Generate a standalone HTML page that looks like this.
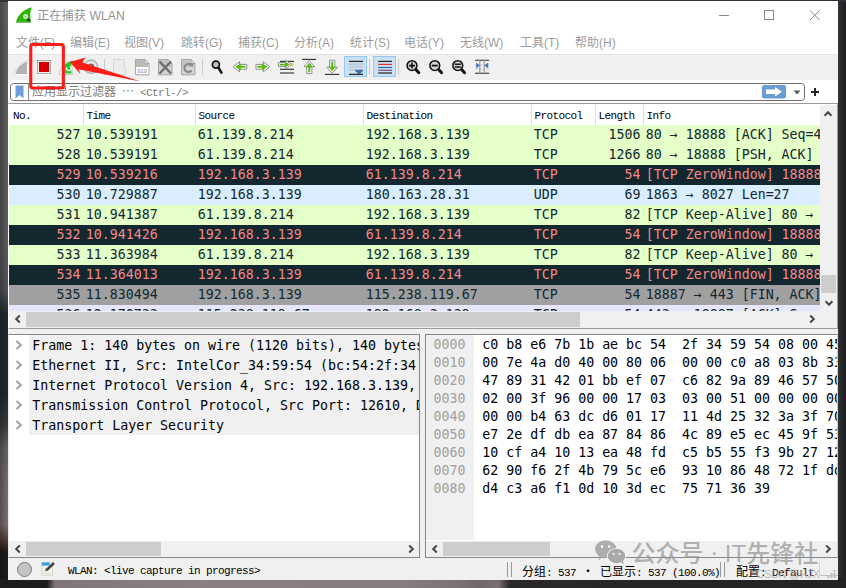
<!DOCTYPE html>
<html lang="zh-CN"><head><meta charset="utf-8"><title>正在捕获 WLAN</title>
<style>
*{box-sizing:border-box;margin:0;padding:0}
html,body{width:846px;height:588px;overflow:hidden}
body{position:relative;background:#242424;font-family:"Liberation Sans","Noto Sans CJK SC",sans-serif}
.abs{position:absolute}
#bgl{position:absolute;left:0;top:0;width:9px;height:588px;background:linear-gradient(90deg,rgba(0,0,0,.28),rgba(0,0,0,0) 85%),linear-gradient(180deg,#606060 0,#5c5c5e 240px,#505256 290px,#1f2b31 314px,#1c2a32 395px,#3a3c3e 425px,#626264 448px,#74696c 478px,#7c6c6e 525px,#4e3c32 541px,#1f1d1d 552px,#1a1a1a 588px)}
#bgb{position:absolute;left:0;top:578px;width:846px;height:10px;background:linear-gradient(90deg,#1c1c1c 0,#1c1c1c 47px,#80767a 55px,#8a7e82 200px,#877c80 400px,#7c7276 460px,#6e6669 480px,#7a7074 498px,#2a2829 510px,#222 846px)}
#bgr{position:absolute;left:837px;top:0;width:9px;height:588px;background:linear-gradient(90deg,#34383a 0,#34383a 1px,#26282a 4px,#1d1e1f 9px)}
#bgt{position:absolute;left:0;top:0;width:846px;height:2px;background:#303438}
#win{position:absolute;left:8px;top:1px;width:830px;height:579px;background:#fff;overflow:hidden}
#title{position:absolute;left:29px;top:6px;font-size:12.25px;line-height:18px;color:#949494;white-space:nowrap}
.mi{position:absolute;top:33px;font-size:12px;line-height:18px;color:#9c9c9c;white-space:nowrap}
#tb{position:absolute;left:0;top:52.5px;width:830px;height:27px;background:#f0f0f0;border-top:1px solid #e6e6e6}
#fb{position:absolute;left:0;top:79px;width:830px;height:24px;background:#fff}
#fin{position:absolute;left:2px;top:3px;width:795px;height:18px;border:1px solid #6e6e6e;border-radius:3.5px;background:#fff}
.ss{font-family:"Liberation Mono","Noto Sans CJK SC",monospace;font-size:11px;letter-spacing:-0.6px;white-space:nowrap;color:#000}
.ss b{font-weight:normal;font-size:12px;letter-spacing:0;font-family:"Noto Sans CJK SC",sans-serif}
#pl{position:absolute;left:0;top:102px;width:830px;height:226px;border:1px solid #9a9a9a;border-left-color:#fff;background:#fff;overflow:hidden}
#plin{position:absolute;left:0;top:1px;width:811px;height:206px;overflow:hidden}
.hd{position:absolute;top:0;height:20px;border-left:1px solid #e0e0e0}
.hd span{position:absolute;left:2.5px;top:3.7px;line-height:14px}
.r{position:absolute;left:0;width:811px;height:20px;font-family:"DejaVu Sans Mono", "Liberation Mono", monospace;font-size:13.29px;line-height:20px;white-space:nowrap;overflow:hidden}
.c{position:absolute;top:-0.5px}
.no{right:739.5px}
.len{right:179.5px}
.g{background:#e4ffc7;color:#12272e}
.d{background:#12272e;color:#f78787}
.u{background:#daeeff;color:#12272e}
.f{background:#a0a0a0;color:#12272e}
.p{background:#e7e6ff;color:#12272e}
.sbh{position:absolute;height:16px;background:#f0f0f0}
.sbv{position:absolute;width:17px;background:#f0f0f0}
.th{position:absolute;background:#cdcdcd}
#dp{position:absolute;left:0;top:333px;width:412px;height:224px;border:1px solid #828790;border-left-color:#e8e8e8;background:#fff;overflow:hidden}
.dr{position:absolute;left:0;width:412px;height:20px}
.chev{position:absolute;left:6.2px;top:5px;width:8px;height:10px}
.dt{position:absolute;left:20px;top:0;width:400px;height:20px;background:#f0f0f0;padding-left:3.2px;font-family:"DejaVu Sans Mono", "Liberation Mono", monospace;font-size:13.29px;line-height:22px;white-space:nowrap;color:#000;overflow:hidden}
#hp{position:absolute;left:417px;top:333px;width:413px;height:224px;border:1px solid #828790;border-right-color:#ccc;background:#fff;overflow:hidden}
#hoff{position:absolute;left:0;top:0;width:48px;height:205px;background:#f0f0f0}
.hr{position:absolute;left:0;width:420px;height:18px;font-family:"DejaVu Sans Mono", "Liberation Mono", monospace;font-size:13.29px;line-height:18px;white-space:pre}
.ho{position:absolute;left:7.5px;top:1px;color:#a0a0a0}
.hb{position:absolute;left:56.2px;top:1px;color:#000}
#st{position:absolute;left:0;top:557px;width:830px;height:22px;background:#f0f0f0}
.grip{position:absolute;top:4px;width:5px;height:15px;border-left:1px solid #9a9a9a;border-right:1px solid #9a9a9a}
#wm{position:absolute;left:623.5px;top:538px;font-size:24px;font-weight:500;line-height:30px;color:rgba(150,150,150,.72);white-space:nowrap;font-family:"Liberation Sans","Noto Sans CJK SC",sans-serif}
#wm2{position:absolute;left:748.6px;top:567px;font-size:10.5px;line-height:12px;color:rgba(176,176,176,.92);white-space:nowrap}
</style></head><body>
<div id="bgl"></div><div id="bgr"></div><div id="bgb"></div><div id="bgt"></div>
<div id="win">
<!--ICON-->
<div id="title">正在捕获 WLAN</div>
<svg class="abs" style="left:700px;top:0" width="130" height="30" viewBox="0 0 130 30"><g stroke="#8a8a8a" stroke-width="1" fill="none"><path d="M11 14.5 H21"/><rect x="56.5" y="9.5" width="9" height="9"/><path d="M102 9.5 L111.5 19 M111.5 9.5 L102 19"/></g></svg>
<span class="mi" style="left:8px">文件(F)</span><span class="mi" style="left:62px">编辑(E)</span><span class="mi" style="left:116px">视图(V)</span><span class="mi" style="left:173px">跳转(G)</span><span class="mi" style="left:230px">捕获(C)</span><span class="mi" style="left:286px">分析(A)</span><span class="mi" style="left:342px">统计(S)</span><span class="mi" style="left:396px">电话(Y)</span><span class="mi" style="left:452px">无线(W)</span><span class="mi" style="left:512px">工具(T)</span><span class="mi" style="left:567px">帮助(H)</span>
<div id="tb"><!--TOOLBAR--></div>
<div id="fb"><div id="fin"></div>
<svg class="abs" style="left:3.6px;top:5px" width="16" height="15" viewBox="0 0 16 15"><path d="M3.5 0.5 H11.5 V13.5 L7.5 10 L3.5 13.5 Z" fill="#6d9eda"/></svg>
<div class="abs" style="left:20px;top:4px;width:1px;height:17px;background:#8a8a8a"></div>
<div class="abs ss" style="left:24px;top:3px;line-height:16px;color:#7c7c7c"><b>应用显示过滤器</b> <b>…</b> &lt;Ctrl-/&gt;</div>
<svg class="abs" style="left:754px;top:5px" width="24" height="14" viewBox="0 0 24 14"><rect width="24" height="13.5" rx="2" fill="#6c9bd2"/><path d="M4 4.5 H13 V2 L20 6.75 L13 11.5 V9 H4 Z" fill="#fff"/></svg>
<svg class="abs" style="left:785px;top:9.5px" width="8" height="5" viewBox="0 0 8 5"><path d="M0.5 0.5 H7.5 L4 4.5 Z" fill="#555"/></svg>
<svg class="abs" style="left:802px;top:7px" width="10" height="10" viewBox="0 0 10 10"><path d="M5 1 V9 M1 5 H9" stroke="#222" stroke-width="2" fill="none"/></svg>
</div>
<div id="pl"><div id="plin">
<div class="ss">
<div class="hd" style="left:-1px;width:75px"><span style="left:4px">No.</span></div>
<div class="hd" style="left:74px;width:112px"><span>Time</span></div>
<div class="hd" style="left:186px;width:168px"><span>Source</span></div>
<div class="hd" style="left:354px;width:168px"><span>Destination</span></div>
<div class="hd" style="left:522px;width:64px"><span>Protocol</span></div>
<div class="hd" style="left:586px;width:48px"><span>Length</span></div>
<div class="hd" style="left:634px;width:190px"><span>Info</span></div>
</div>
<div class="r g" style="top:20px"><span class="c no">527</span><span class="c" style="left:76.7px">10.539191</span><span class="c" style="left:188.7px">61.139.8.214</span><span class="c" style="left:356.7px">192.168.3.139</span><span class="c" style="left:524.7px">TCP</span><span class="c len">1506</span><span class="c" style="left:636.7px">80 → 18888 [ACK] Seq=4</span></div>
<div class="r g" style="top:40px"><span class="c no">528</span><span class="c" style="left:76.7px">10.539191</span><span class="c" style="left:188.7px">61.139.8.214</span><span class="c" style="left:356.7px">192.168.3.139</span><span class="c" style="left:524.7px">TCP</span><span class="c len">1266</span><span class="c" style="left:636.7px">80 → 18888 [PSH, ACK] </span></div>
<div class="r d" style="top:60px"><span class="c no">529</span><span class="c" style="left:76.7px">10.539216</span><span class="c" style="left:188.7px">192.168.3.139</span><span class="c" style="left:356.7px">61.139.8.214</span><span class="c" style="left:524.7px">TCP</span><span class="c len">54</span><span class="c" style="left:636.7px">[TCP ZeroWindow] 18888 → 80</span></div>
<div class="r u" style="top:80px"><span class="c no">530</span><span class="c" style="left:76.7px">10.729887</span><span class="c" style="left:188.7px">192.168.3.139</span><span class="c" style="left:356.7px">180.163.28.31</span><span class="c" style="left:524.7px">UDP</span><span class="c len">69</span><span class="c" style="left:636.7px">1863 → 8027 Len=27</span></div>
<div class="r g" style="top:100px"><span class="c no">531</span><span class="c" style="left:76.7px">10.941387</span><span class="c" style="left:188.7px">61.139.8.214</span><span class="c" style="left:356.7px">192.168.3.139</span><span class="c" style="left:524.7px">TCP</span><span class="c len">82</span><span class="c" style="left:636.7px">[TCP Keep-Alive] 80 → 18888</span></div>
<div class="r d" style="top:120px"><span class="c no">532</span><span class="c" style="left:76.7px">10.941426</span><span class="c" style="left:188.7px">192.168.3.139</span><span class="c" style="left:356.7px">61.139.8.214</span><span class="c" style="left:524.7px">TCP</span><span class="c len">54</span><span class="c" style="left:636.7px">[TCP ZeroWindow] 18888 → 80</span></div>
<div class="r g" style="top:140px"><span class="c no">533</span><span class="c" style="left:76.7px">11.363984</span><span class="c" style="left:188.7px">61.139.8.214</span><span class="c" style="left:356.7px">192.168.3.139</span><span class="c" style="left:524.7px">TCP</span><span class="c len">82</span><span class="c" style="left:636.7px">[TCP Keep-Alive] 80 → 18888</span></div>
<div class="r d" style="top:160px"><span class="c no">534</span><span class="c" style="left:76.7px">11.364013</span><span class="c" style="left:188.7px">192.168.3.139</span><span class="c" style="left:356.7px">61.139.8.214</span><span class="c" style="left:524.7px">TCP</span><span class="c len">54</span><span class="c" style="left:636.7px">[TCP ZeroWindow] 18888 → 80</span></div>
<div class="r f" style="top:180px"><span class="c no">535</span><span class="c" style="left:76.7px">11.830494</span><span class="c" style="left:188.7px">192.168.3.139</span><span class="c" style="left:356.7px">115.238.119.67</span><span class="c" style="left:524.7px">TCP</span><span class="c len">54</span><span class="c" style="left:636.7px">18887 → 443 [FIN, ACK] Seq=1</span></div>
<div class="r p" style="top:200px"><span class="c no">536</span><span class="c" style="left:76.7px">12.170733</span><span class="c" style="left:188.7px">115.238.119.67</span><span class="c" style="left:356.7px">192.168.3.139</span><span class="c" style="left:524.7px">TCP</span><span class="c len">54</span><span class="c" style="left:636.7px">443 → 18887 [ACK] Seq=1 Ack=2</span></div>

</div>
<div class="sbv" style="left:811px;top:1px;height:206px"><div class="th" style="left:1px;top:170px;width:15px;height:18px"></div><svg class="abs" style="left:0.3000000000000007px;top:1.1999999999999993px" width="16" height="16" viewBox="-8 -8 16 16"><path d="M-3.4 1.8 L0 -1.8 L3.4 1.8" fill="none" stroke="#484848" stroke-width="2"/></svg><svg class="abs" style="left:0.5px;top:190px" width="16" height="16" viewBox="-8 -8 16 16"><path d="M-3.4 -1.8 L0 1.8 L3.4 -1.8" fill="none" stroke="#484848" stroke-width="2"/></svg></div>
<div class="sbh" style="left:0;top:207px;width:811px;height:17px"><div class="th" style="left:17px;top:1.3px;width:554px;height:14.5px"></div><svg class="abs" style="left:1px;top:0.40000000000000036px" width="16" height="16" viewBox="-8 -8 16 16"><path d="M1.8 -3.4 L-1.8 0 L1.8 3.4" fill="none" stroke="#484848" stroke-width="2"/></svg><svg class="abs" style="left:795px;top:0.40000000000000036px" width="16" height="16" viewBox="-8 -8 16 16"><path d="M-1.8 -3.4 L1.8 0 L-1.8 3.4" fill="none" stroke="#484848" stroke-width="2"/></svg></div>
<div class="abs" style="left:811px;top:207px;width:17px;height:17px;background:#f0f0f0"></div>
</div>
<div class="abs" style="left:0;top:328px;width:830px;height:5px;background:#f0f0f0"></div>
<div class="abs" style="left:412px;top:333px;width:5px;height:224px;background:#f0f0f0"></div>
<div id="dp">
<div class="dr" style="top:0px"><svg class="chev" viewBox="0 0 8 10"><path d="M1.5 1 L6 5 L1.5 9" fill="none" stroke="#9c9c9c" stroke-width="1.7"/></svg><div class="dt">Frame 1: 140 bytes on wire (1120 bits), 140 bytes captured (1120 bits)</div></div>
<div class="dr" style="top:20px"><svg class="chev" viewBox="0 0 8 10"><path d="M1.5 1 L6 5 L1.5 9" fill="none" stroke="#9c9c9c" stroke-width="1.7"/></svg><div class="dt">Ethernet II, Src: IntelCor_34:59:54 (bc:54:2f:34:59:54), Dst: HuaweiTe</div></div>
<div class="dr" style="top:40px"><svg class="chev" viewBox="0 0 8 10"><path d="M1.5 1 L6 5 L1.5 9" fill="none" stroke="#9c9c9c" stroke-width="1.7"/></svg><div class="dt">Internet Protocol Version 4, Src: 192.168.3.139, Dst: 71.137.49.66</div></div>
<div class="dr" style="top:60px"><svg class="chev" viewBox="0 0 8 10"><path d="M1.5 1 L6 5 L1.5 9" fill="none" stroke="#9c9c9c" stroke-width="1.7"/></svg><div class="dt">Transmission Control Protocol, Src Port: 12610, Dst Port: 443, Seq: 1</div></div>
<div class="dr" style="top:80px"><svg class="chev" viewBox="0 0 8 10"><path d="M1.5 1 L6 5 L1.5 9" fill="none" stroke="#9c9c9c" stroke-width="1.7"/></svg><div class="dt">Transport Layer Security</div></div>

<div class="sbh" style="left:0;top:206px;width:411px"><div class="th" style="left:17px;top:0.5px;width:135px;height:14.3px"></div><svg class="abs" style="left:0.5px;top:-0.2999999999999998px" width="16" height="16" viewBox="-8 -8 16 16"><path d="M1.8 -3.4 L-1.8 0 L1.8 3.4" fill="none" stroke="#484848" stroke-width="2"/></svg><svg class="abs" style="left:394.3px;top:-0.2999999999999998px" width="16" height="16" viewBox="-8 -8 16 16"><path d="M-1.8 -3.4 L1.8 0 L-1.8 3.4" fill="none" stroke="#484848" stroke-width="2"/></svg></div>
</div>
<div id="hp"><div id="hoff"></div>
<div class="hr" style="top:0px"><span class="ho">0000</span><span class="hb">c0 b8 e6 7b 1b ae bc 54  2f 34 59 54 08 00 45 00</span></div>
<div class="hr" style="top:18px"><span class="ho">0010</span><span class="hb">00 7e 4a d0 40 00 80 06  00 00 c0 a8 03 8b 33 89</span></div>
<div class="hr" style="top:36px"><span class="ho">0020</span><span class="hb">47 89 31 42 01 bb ef 07  c6 82 9a 89 46 57 50 18</span></div>
<div class="hr" style="top:54px"><span class="ho">0030</span><span class="hb">02 00 3f 96 00 00 17 03  03 00 51 00 00 00 00 00</span></div>
<div class="hr" style="top:72px"><span class="ho">0040</span><span class="hb">00 00 b4 63 dc d6 01 17  11 4d 25 32 3a 3f 70 7e</span></div>
<div class="hr" style="top:90px"><span class="ho">0050</span><span class="hb">e7 2e df db ea 87 84 86  4c 89 e5 ec 45 9f 53 b1</span></div>
<div class="hr" style="top:108px"><span class="ho">0060</span><span class="hb">10 cf a4 10 13 ea 48 fd  c5 b5 55 f3 9b 27 12 09</span></div>
<div class="hr" style="top:126px"><span class="ho">0070</span><span class="hb">62 90 f6 2f 4b 79 5c e6  93 10 86 48 72 1f dd 4a</span></div>
<div class="hr" style="top:144px"><span class="ho">0080</span><span class="hb">d4 c3 a6 f1 0d 10 3d ec  75 71 36 39</span></div>

<div class="sbh" style="left:0;top:206px;width:412px"><div class="th" style="left:17px;top:0.5px;width:107px;height:14.3px"></div><svg class="abs" style="left:0.5px;top:-0.2999999999999998px" width="16" height="16" viewBox="-8 -8 16 16"><path d="M1.8 -3.4 L-1.8 0 L1.8 3.4" fill="none" stroke="#484848" stroke-width="2"/></svg><svg class="abs" style="left:394.3px;top:-0.2999999999999998px" width="16" height="16" viewBox="-8 -8 16 16"><path d="M-1.8 -3.4 L1.8 0 L-1.8 3.4" fill="none" stroke="#484848" stroke-width="2"/></svg></div>
</div>
<div id="st">
<svg class="abs" style="left:8.4px;top:2.5px" width="17" height="17" viewBox="0 0 17 17"><circle cx="8.5" cy="8.5" r="7" fill="#c4c4c4" stroke="#7a7a7a" stroke-width="1"/></svg>
<!--NOTE-->
<div class="abs ss" style="left:60px;top:5px;line-height:16px">WLAN: &lt;live capture in progress&gt;</div>
<div class="grip" style="left:499px"></div>
<div class="abs ss" style="left:514px;top:5px;line-height:16px"><b>分组</b>: 537 <b>·</b> <b>已显示</b>: 537 (100.0%)</div>
<div class="grip" style="left:712px"></div><svg class="abs" style="left:810px;top:0.6px" width="20" height="20" viewBox="0 0 20 20"><path d="M1.5 2.4 V16.4" stroke="#d4d4d4" stroke-width="1"/><g fill="#bdbdbd"><rect x="15.5" y="11" width="2" height="2"/><rect x="12.5" y="14" width="2" height="2"/><rect x="15.5" y="14" width="2" height="2"/><rect x="9.5" y="17" width="2" height="2"/><rect x="12.5" y="17" width="2" height="2"/><rect x="15.5" y="17" width="2" height="2"/></g></svg>
<div class="abs ss" style="left:728px;top:5px;line-height:16px"><b>配置</b>: Default</div>
</div>
<div id="wm">公众号 <span style="position:relative;top:-2px">·</span> IT先锋社</div>
<div id="wm2">CSDN @HJX<span style="letter-spacing:-1px">——</span></div>
<svg class="abs" style="left:-8px;top:-1px" width="846" height="588" viewBox="0 0 846 588"><path d="M16 22.7 C17 15.5 23.5 9.3 31.6 7.2 C29.9 12 29.9 18 30.9 22.7 Z" fill="#2db500"/><path d="M17 22.2 H30.6" stroke="#86b878" stroke-width="1"/><circle cx="25.6" cy="16.6" r="2.5" fill="#d8ecd6"/><circle cx="25.6" cy="16.6" r="1" fill="#7fbf78"/><rect x="27" y="18.6" width="3.4" height="2.8" fill="#2d4a3a"/><path d="M14.8 74.6 C15.6 68 21 62.2 28.6 60.4 C27.2 64.6 27.2 70.2 28 74.6 Z" fill="#b3b3b3" stroke="#fafafa" stroke-width="1.2"/><path d="M14.3 75.2 C15.1 68 21 61.6 29.3 59.7" fill="none" stroke="#d2d2d2" stroke-width=".8"/><rect x="37.5" y="60.5" width="13" height="13" fill="#fff" stroke="#adadad" stroke-width="1"/><rect x="38.9" y="61.9" width="10.2" height="10.2" fill="#d40000"/><path d="M59.3 74.6 C60.1 68 65.5 62.2 73.1 60.4 C71.7 64.6 71.7 70.2 72.5 74.6 Z" fill="#fbfbfb" stroke="#c9c9c9" stroke-width="1"/><path d="M65 73.6 V64.3 C67 62.6 69.6 61.5 72 61 C71 65 71 70 71.6 73.6 Z" fill="#25c925"/><path d="M66.6 67.5 A2.3 2.3 0 1 0 70 66.2" fill="none" stroke="#fff" stroke-width="1.3"/><circle cx="91" cy="66.7" r="6.6" fill="#e9e9e9" stroke="#b5b5b5" stroke-width="1.6"/><circle cx="91" cy="66.7" r="3.2" fill="#6a6a6a"/><circle cx="91" cy="66.7" r="1.3" fill="#ddd"/><path d="M104.5 59 V75" stroke="#c9c9c9" stroke-width="1"/><path d="M202.6 59 V75" stroke="#c9c9c9" stroke-width="1"/><path d="M369.6 59 V75" stroke="#c9c9c9" stroke-width="1"/><path d="M398.4 59 V75" stroke="#c9c9c9" stroke-width="1"/><path d="M113.5 59.5 H124.5 V69 H126 V74.5 H113.5 Z" fill="#ececec" stroke="#d6d6d6" stroke-width="1"/><path d="M135.5 59.5 H145.0 L149.0 63.5 V74.8 H135.5 Z" fill="#fff" stroke="#a6a6a6" stroke-width="1"/><path d="M136.0 60.0 H145.0 L148.5 63.5 V67.0 H136.0 Z" fill="#b9b9b9"/><path d="M145.0 59.5 V63.5 H149.0 Z" fill="#e6e6e6" stroke="#a6a6a6" stroke-width=".8"/><text x="142.2" y="72.6" font-family="Liberation Mono, monospace" font-size="5.5" fill="#8c8c8c" text-anchor="middle">010</text><path d="M158.5 59.5 H168.0 L172.0 63.5 V74.8 H158.5 Z" fill="#d4d4d4" stroke="#a6a6a6" stroke-width="1"/><path d="M159.0 60.0 H168.0 L171.5 63.5 V67.0 H159.0 Z" fill="#c4c4c4"/><path d="M168.0 59.5 V63.5 H172.0 Z" fill="#e6e6e6" stroke="#a6a6a6" stroke-width=".8"/><path d="M159.5 61.5 L171 73.5 M171 61.5 L159.5 73.5" stroke="#6a6a6a" stroke-width="2.2"/><path d="M181.5 59.5 H191.0 L195.0 63.5 V74.8 H181.5 Z" fill="#d4d4d4" stroke="#a6a6a6" stroke-width="1"/><path d="M182.0 60.0 H191.0 L194.5 63.5 V67.0 H182.0 Z" fill="#c4c4c4"/><path d="M191.0 59.5 V63.5 H195.0 Z" fill="#e6e6e6" stroke="#a6a6a6" stroke-width=".8"/><path d="M191.8 66 A4 4 0 1 0 191.5 70.5" fill="none" stroke="#8a8a8a" stroke-width="2.2"/><path d="M189.6 62.6 L193.6 63.4 L192.4 67.4 Z" fill="#8a8a8a"/><circle cx="215.9" cy="64.6" r="3.5" fill="#c4c4c4" stroke="#111" stroke-width="1.7"/><path d="M218.6 67.8 L221.4 72.6" stroke="#111" stroke-width="2.6" stroke-linecap="round"/><polygon points="233.0,66.8 239.5,61.8 239.5,64.4 246.8,64.4 246.8,69.2 239.5,69.2 239.5,71.8" fill="#fff" stroke="#8e8e8e" stroke-width="1" stroke-linejoin="round"/><polygon points="235.2,66.8 240.8,63.2 240.8,65.8 245.4,65.8 245.4,67.8 240.8,67.8 240.8,70.4" fill="#5cb811"/><polygon points="269.8,66.8 263.3,61.8 263.3,64.4 256.0,64.4 256.0,69.2 263.3,69.2 263.3,71.8" fill="#fff" stroke="#8e8e8e" stroke-width="1" stroke-linejoin="round"/><polygon points="267.6,66.8 262.0,63.2 262.0,65.8 257.4,65.8 257.4,67.8 262.0,67.8 262.0,70.4" fill="#5cb811"/><path d="M280 61.4 H294" stroke="#2a2a2a" stroke-width="1.1"/><path d="M280 65.3 H294" stroke="#2a2a2a" stroke-width="1.1"/><path d="M280 69.3 H294" stroke="#2a2a2a" stroke-width="1.1"/><path d="M280 73 H294" stroke="#2a2a2a" stroke-width="1.1"/><rect x="291" y="63.2" width="3" height="3" fill="#e6de6e"/><polygon points="292,64.6 285.7,60.4 285.7,62.6 278.4,62.6 278.4,66.6 285.7,66.6 285.7,68.8" fill="#fff" stroke="#8e8e8e" stroke-width="1" stroke-linejoin="round"/><polygon points="290,64.6 285,61.8 285,63.7 279.7,63.7 279.7,65.5 285,65.5 285,67.4" fill="#5cb811"/><path d="M302 59.4 H316" stroke="#2a2a2a" stroke-width="1.1"/><polygon points="309.3,60.6 314.6,66.6 311.9,66.6 311.9,73.6 306.7,73.6 306.7,66.6 304.0,66.6" fill="#fff" stroke="#8e8e8e" stroke-width="1" stroke-linejoin="round"/><polygon points="309.3,62.6 312.9,67.4 310.3,67.4 310.3,72.2 308.3,72.2 308.3,67.4 305.7,67.4" fill="#5cb811"/><path d="M325 74.4 H339.2" stroke="#2a2a2a" stroke-width="1.1"/><polygon points="332.2,73.2 337.5,67.2 334.8,67.2 334.8,60.2 329.6,60.2 329.6,67.2 326.9,67.2" fill="#fff" stroke="#8e8e8e" stroke-width="1" stroke-linejoin="round"/><polygon points="332.2,71.2 335.8,66.4 333.2,66.4 333.2,61.6 331.2,61.6 331.2,66.4 328.6,66.4" fill="#5cb811"/><rect x="344.5" y="56.5" width="22" height="20" fill="#c9e0f5" stroke="#93c9f5" stroke-width="1"/><path d="M349 61.4 H363 M349 74.3 H363" stroke="#2a2a2a" stroke-width="1.2"/><path d="M349 64.1 H363" stroke="#b8b8b8" stroke-width="1"/><path d="M349 66.9 H363" stroke="#b8b8b8" stroke-width="1"/><path d="M349 69.7 H363" stroke="#b8b8b8" stroke-width="1"/><path d="M355.2 70.4 H363 L359.2 74 Z" fill="#3465a4" stroke="#3465a4" stroke-width=".8" stroke-linejoin="round"/><rect x="373.5" y="56.5" width="22" height="20" fill="#c9e0f5" stroke="#93c9f5" stroke-width="1"/><path d="M378.2 61.4 H392" stroke="#222" stroke-width="1.2"/><path d="M378.2 64.4 H392" stroke="#ef2929" stroke-width="1.2"/><path d="M378.2 67.5 H392" stroke="#3465a4" stroke-width="1.2"/><path d="M378.2 70.3 H392" stroke="#75507b" stroke-width="1.2"/><path d="M378.2 73 H392" stroke="#222" stroke-width="1.2"/><circle cx="412" cy="65.6" r="4.9" fill="#d6d6d6" stroke="#111" stroke-width="1.55"/><path d="M415.8 69.5 L418.8 72.69999999999999" stroke="#111" stroke-width="3" stroke-linecap="round"/><path d="M409 65.6 H415 M412 62.599999999999994 V68.6" stroke="#111" stroke-width="1.6"/><circle cx="434.8" cy="65.6" r="4.9" fill="#d6d6d6" stroke="#111" stroke-width="1.55"/><path d="M438.6 69.5 L441.6 72.69999999999999" stroke="#111" stroke-width="3" stroke-linecap="round"/><path d="M431.8 65.6 H437.8" stroke="#111" stroke-width="1.8"/><circle cx="457.8" cy="65.6" r="4.9" fill="#d6d6d6" stroke="#111" stroke-width="1.55"/><path d="M461.6 69.5 L464.6 72.69999999999999" stroke="#111" stroke-width="3" stroke-linecap="round"/><path d="M454.8 64.19999999999999 H460.8 M454.8 67.0 H460.8" stroke="#111" stroke-width="1.5"/><path d="M475 60.2 H489.2 M475 73.2 H489.2" stroke="#2a2a2a" stroke-width="1.1"/><path d="M475 64.8 H489.2 M475 69 H489.2" stroke="#cfcfcf" stroke-width=".8"/><path d="M479.8 60 V73.4 M484.2 60 V73.4" stroke="#9a9a9a" stroke-width="1.2"/><path d="M476.2 62.4 L479.8 65.4 L476.2 68.4 Z M488.2 62.4 L484.4 65.4 L488.2 68.4 Z" fill="#3a76c6"/><rect x="41.8" y="562.4" width="10.6" height="12.8" fill="#f4f4ec" stroke="#cfcfc6" stroke-width=".8"/><rect x="41.8" y="562.4" width="7.8" height="3.2" fill="#3b9ddd"/><path d="M43.5 568.5 H50 M43.5 571 H46 M43.5 573.3 H50.5" stroke="#d4d4cc" stroke-width=".8"/><path d="M54 563 L46.3 570.2" stroke="#454545" stroke-width="2.6"/><path d="M45 571.6 L47.4 569.2 L46.1 568.9 Z" fill="#222"/><g fill="#a9a9a9" fill-opacity=".95"><ellipse cx="605.6" cy="549" rx="10.6" ry="8.7"/><path d="M599.5 555.5 L598.5 560 L603.5 557.3 Z"/></g><ellipse cx="616.5" cy="556.1" rx="9.6" ry="8.1" fill="#fff" fill-opacity=".9"/><g fill="#a9a9a9"><ellipse cx="616.5" cy="556.1" rx="8.8" ry="7.4"/><path d="M621 562 L623.8 564.5 L623 560.5 Z"/></g><g fill="#fff"><circle cx="602" cy="546.6" r="1.3"/><circle cx="609.2" cy="546.6" r="1.3"/><circle cx="613.6" cy="554" r="1.1"/><circle cx="619.6" cy="554" r="1.1"/></g><rect x="30.75" y="44.5" width="32.6" height="43.5" rx="2" fill="none" stroke="#fb1d16" stroke-width="3.1"/><polygon points="69.8,62.1 85.5,57.4 82.4,62.5 140.6,81.6 78.6,69.2 80.4,74" fill="#fb1d16"/></svg>
</div>
</body></html>
